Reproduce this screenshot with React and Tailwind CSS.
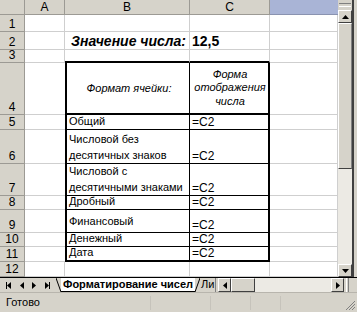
import React from 'react';

const FONT = { fontFamily: '"Liberation Sans", Arial, sans-serif' };

// column widths: row header, A, B, C, D
const rows = [
  { n: 1, h: 'h-[17px]' },
  { n: 2, h: 'h-[18px]', kind: 'title' },
  { n: 3, h: 'h-[13px]', kind: 'top' },
  { n: 4, h: 'h-[52px]', kind: 'head' },
  { n: 5, h: 'h-[15px]', b: ['Общий'] },
  { n: 6, h: 'h-[34px]', b: ['Числовой без', 'десятичных знаков'] },
  { n: 7, h: 'h-[32px]', b: ['Числовой с', 'десятичными знаками'] },
  { n: 8, h: 'h-[14px]', b: ['Дробный'] },
  { n: 9, h: 'h-[23px]', b: ['Финансовый'], mid: true },
  { n: 10, h: 'h-[14px]', b: ['Денежный'] },
  { n: 11, h: 'h-[15px]', b: ['Дата'], last: true },
  { n: 12, h: 'h-[15px]' },
];

const grid = 'border-r border-b border-[#cfcfcf]';

function Row({ r }) {
  const inTable = r.b || r.kind === 'head';
  const bottom = r.last || r.kind === 'head' ? 'border-b-2' : 'border-b';
  return (
    <div className={`flex ${r.h}`}>
      <div className="w-[25px] shrink-0 bg-[#d6d3ca] border-r border-b border-[#9c9a94] flex items-end justify-center pb-[1px] text-[12px] leading-[12px]">
        {r.n}
      </div>
      <div className={`w-[40px] shrink-0 ${inTable ? 'border-b border-[#cfcfcf]' : grid}`} />
      {inTable ? (
        <>
          <div className={`w-[125px] shrink-0 border-l-2 border-r ${bottom} border-black flex ${r.kind === 'head' ? 'items-center justify-center' : r.mid ? 'items-center' : 'items-end'} pl-[2px] text-[11px] leading-[16px] overflow-hidden`}>
            {r.kind === 'head' ? (
              <span className="italic">Формат ячейки:</span>
            ) : (
              <div className="whitespace-nowrap">
                {r.b.map((t) => (
                  <div key={t}>{t}</div>
                ))}
              </div>
            )}
          </div>
          <div className={`w-[80px] shrink-0 border-r-2 ${bottom} border-black flex ${r.kind === 'head' ? 'items-center justify-center' : 'items-end'} pl-[2px] overflow-hidden`}>
            {r.kind === 'head' ? (
              <div className="italic text-[11px] leading-[13.5px] text-center">
                <div>Форма</div>
                <div>отображения</div>
                <div>числа</div>
              </div>
            ) : (
              <span className="text-[12px] leading-[13px]">=C2</span>
            )}
          </div>
        </>
      ) : (
        <>
          <div className={`w-[125px] shrink-0 flex items-end justify-end pr-[3px] ${r.kind === 'top' ? 'border-r border-[#cfcfcf] border-b-2 border-b-black' : grid}`}>
            {r.kind === 'title' && (
              <span className="font-bold italic text-[14px] leading-[16px] whitespace-nowrap">Значение числа:</span>
            )}
          </div>
          <div className={`w-[80px] shrink-0 flex items-end pl-[2px] ${r.kind === 'top' ? 'border-r border-[#cfcfcf] border-b-2 border-b-black' : grid}`}>
            {r.kind === 'title' && <span className="font-bold text-[14px] leading-[16px]">12,5</span>}
          </div>
        </>
      )}
      <div className={`flex-1 ${grid}`} />
    </div>
  );
}

function Tri({ dir }) {
  return dir === 'l' ? (
    <svg width="4" height="7" viewBox="0 0 4 7"><path d="M4 0 L0 3.5 L4 7Z" fill="#000" /></svg>
  ) : (
    <svg width="4" height="7" viewBox="0 0 4 7"><path d="M0 0 L4 3.5 L0 7Z" fill="#000" /></svg>
  );
}

function VScroll() {
  return (
    <div className="w-[19px] shrink-0 flex">
      <div className="w-[14px] flex flex-col bg-[#eceae4]">
        <div className="h-[10px] bg-[#d6d3ca] flex flex-col justify-center gap-[2px] px-[1px]">
          <div className="h-px bg-[#808080]" />
          <div className="h-px bg-white" />
        </div>
        <div className="h-[13px] bg-[#d6d3ca] border border-t-white border-l-white border-r-[#404040] border-b-[#404040] flex items-center justify-center">
          <svg width="7" height="4" viewBox="0 0 7 4"><path d="M0 4 L3.5 0 L7 4Z" fill="#000" /></svg>
        </div>
        <div className="h-[146px] bg-[#d6d3ca] border border-t-white border-l-white border-r-[#808080] border-b-[#404040]" />
        <div className="flex-1" />
        <div className="h-[13px] bg-[#d6d3ca] border border-t-white border-l-white border-r-[#404040] border-b-[#404040] flex items-center justify-center">
          <svg width="7" height="4" viewBox="0 0 7 4"><path d="M0 0 L3.5 4 L7 0Z" fill="#000" /></svg>
        </div>
      </div>
      <div className="w-[2px] bg-[#404040]" />
      <div className="flex-1 bg-[#d6d3ca]" />
    </div>
  );
}

export default function App() {
  return (
    <div className="w-[357px] h-[312px] bg-white flex flex-col overflow-hidden text-black" style={FONT}>
      <div className="flex h-[277px]">
        <div className="flex-1 flex flex-col">
          <div className="flex h-[15px] text-[12px] leading-[14px]">
            <div className="w-[25px] bg-[#d6d3ca] border-r border-b border-[#9c9a94]" />
            <div className="w-[40px] bg-[#d6d3ca] border-r border-b border-[#9c9a94] text-center">A</div>
            <div className="w-[125px] bg-[#d6d3ca] border-r border-b border-[#9c9a94] text-center">B</div>
            <div className="w-[80px] bg-[#d6d3ca] border-r border-b border-[#9c9a94] text-center">C</div>
            <div className="flex-1 bg-[#a9b4d6] border-b border-[#8a93b0]" />
          </div>
          {rows.map((r) => (
            <Row key={r.n} r={r} />
          ))}
        </div>
        <VScroll />
      </div>

      <div className="h-[15px] flex bg-[#d6d3ca] border-t border-black">
        <div className="w-[56px] flex items-center justify-around px-[2px]">
          <div className="flex items-center"><div className="w-px h-[7px] bg-black" /><Tri dir="l" /></div>
          <Tri dir="l" />
          <Tri dir="r" />
          <div className="flex items-center"><Tri dir="r" /><div className="w-px h-[7px] bg-black" /></div>
        </div>
        <div className="flex items-stretch">
          <svg width="5" height="14" viewBox="0 0 5 14"><path d="M0 0 L5 14" stroke="#000" strokeWidth="1" fill="none" /></svg>
          <div className="bg-white px-[2px] text-[11px] leading-[13px] font-bold border-b border-black whitespace-nowrap">Форматирование чисел</div>
          <svg width="5" height="14" viewBox="0 0 5 14"><path d="M5 0 L0 14" stroke="#000" strokeWidth="1" fill="none" /></svg>
          <div className="px-[1px] text-[11px] leading-[13px] whitespace-nowrap">Ли</div>
          <div className="w-px bg-[#808080]" />
        </div>
        <div className="w-[2px]" />
        <div className="w-[13px] border border-t-white border-l-white border-r-[#404040] border-b-[#404040] flex items-center justify-center">
          <Tri dir="l" />
        </div>
        <div className="w-[24px] border border-t-white border-l-white border-r-[#404040] border-b-[#404040]" />
        <div className="w-[76px] bg-[#eceae4]" />
        <div className="w-[13px] border border-t-white border-l-white border-r-[#404040] border-b-[#404040] flex items-center justify-center">
          <Tri dir="r" />
        </div>
        <div className="w-[3px] border-l border-white border-r border-r-[#808080] ml-[2px]" />
        <div className="flex-1" />
      </div>

      <div className="flex-1 bg-[#d6d3ca] flex items-center text-[11px] border-t border-[#b8b5ad]">
        <div className="w-[150px] pl-[6px]">Готово</div>
        <div className="w-[60px] h-[14px] border-l border-[#c6c3bb]" />
        <div className="w-[40px] h-[14px] border-l border-[#c6c3bb]" />
        <div className="w-[30px] h-[14px] border-l border-[#c6c3bb]" />
        <div className="w-[30px] h-[14px] border-l border-[#c6c3bb]" />
        <div className="flex-1 h-full flex items-end justify-end pr-[1px] pb-[1px]">
          <svg width="11" height="11" viewBox="0 0 11 11">
            <path d="M10 1 L1 10 M10 4 L4 10 M10 7 L7 10" stroke="#808080" strokeWidth="1" />
          </svg>
        </div>
      </div>
    </div>
  );
}
